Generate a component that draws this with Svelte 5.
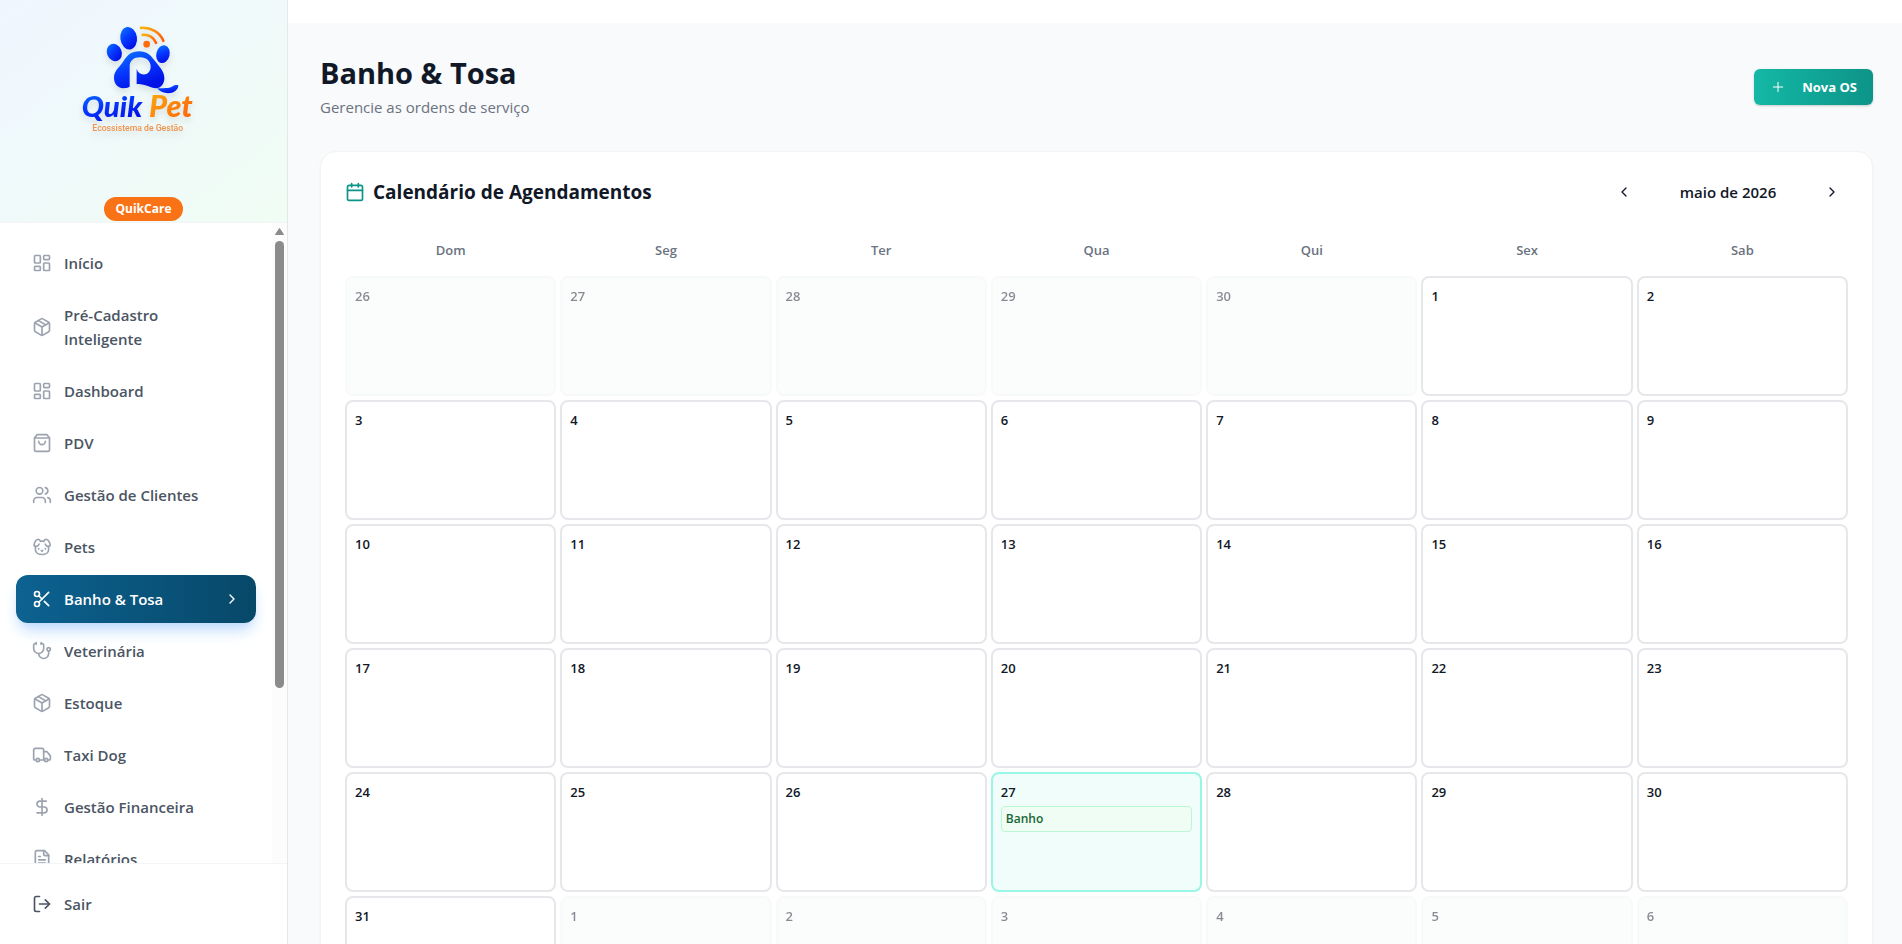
<script>
    const icons = {
        dashboard: '<rect width="7" height="9" x="3" y="3" rx="1"/><rect width="7" height="5" x="14" y="3" rx="1"/><rect width="7" height="9" x="14" y="12" rx="1"/><rect width="7" height="5" x="3" y="16" rx="1"/>',
        box: '<path d="m7.5 4.27 9 5.15"/><path d="M21 8a2 2 0 0 0-1-1.73l-7-4a2 2 0 0 0-2 0l-7 4A2 2 0 0 0 3 8v8a2 2 0 0 0 1 1.73l7 4a2 2 0 0 0 2 0l7-4A2 2 0 0 0 21 16Z"/><path d="m3.3 7 8.7 5 8.7-5"/><path d="M12 22V12"/>',
        bag: '<path d="M6 2 3 6v14a2 2 0 0 0 2 2h14a2 2 0 0 0 2-2V6l-3-4Z"/><path d="M3 6h18"/><path d="M16 10a4 4 0 0 1-8 0"/>',
        users: '<path d="M16 21v-2a4 4 0 0 0-4-4H6a4 4 0 0 0-4 4v2"/><circle cx="9" cy="7" r="4"/><path d="M22 21v-2a4 4 0 0 0-3-3.87"/><path d="M16 3.13a4 4 0 0 1 0 7.75"/>',
        dog: '<path d="M10 5.172C10 3.782 8.423 2.679 6.5 3c-2.823.47-4.113 6.006-4 7 .08.703 1.725 1.722 3.656 1 1.261-.472 1.96-1.45 2.344-2.5"/><path d="M14.267 5.172c0-1.39 1.577-2.493 3.5-2.172 2.823.47 4.113 6.006 4 7-.08.703-1.725 1.722-3.656 1-1.261-.472-1.855-1.45-2.239-2.5"/><path d="M8 14v.5"/><path d="M16 14v.5"/><path d="M11.25 16.25h1.5L12 17l-.75-.75Z"/><path d="M4.42 11.247A13.152 13.152 0 0 0 4 14.556C4 18.728 7.582 21 12 21s8-2.272 8-6.444c0-1.061-.162-2.2-.493-3.309m-9.243-6.082A8.801 8.801 0 0 1 12 5c.78 0 1.5.108 2.161.306"/>',
        scissors: '<circle cx="6" cy="6" r="3"/><path d="M8.12 8.12 12 12"/><path d="M20 4 8.12 15.88"/><circle cx="6" cy="18" r="3"/><path d="M14.8 14.8 20 20"/>',
        stethoscope: '<path d="M11 2v2"/><path d="M5 2v2"/><path d="M5 3H4a2 2 0 0 0-2 2v4a6 6 0 0 0 12 0V5a2 2 0 0 0-2-2h-1"/><path d="M8 15a6 6 0 0 0 12 0v-3"/><circle cx="20" cy="10" r="2"/>',
        truck: '<path d="M14 18V6a2 2 0 0 0-2-2H4a2 2 0 0 0-2 2v11a1 1 0 0 0 1 1h2"/><path d="M15 18H9"/><path d="M19 18h2a1 1 0 0 0 1-1v-3.65a1 1 0 0 0-.22-.624l-3.48-4.35A1 1 0 0 0 17.52 8H14"/><circle cx="17" cy="18" r="2"/><circle cx="7" cy="18" r="2"/>',
        dollar: '<path d="M12 2v20"/><path d="M17 5H9.5a3.5 3.5 0 0 0 0 7h5a3.5 3.5 0 0 1 0 7H6"/>',
        file: '<path d="M15 2H6a2 2 0 0 0-2 2v16a2 2 0 0 0 2 2h12a2 2 0 0 0 2-2V7Z"/><path d="M14 2v4a2 2 0 0 0 2 2h4"/><path d="M10 9H8"/><path d="M16 13H8"/><path d="M16 17H8"/>',
        logout: '<path d="M9 21H5a2 2 0 0 1-2-2V5a2 2 0 0 1 2-2h4"/><path d="m16 17 5-5-5-5"/><path d="M21 12H9"/>',
        calendar: '<path d="M8 2v4"/><path d="M16 2v4"/><rect width="18" height="18" x="3" y="4" rx="2"/><path d="M3 10h18"/>',
        left: '<path d="m15 18-6-6 6-6"/>',
        right: '<path d="m9 18 6-6-6-6"/>',
        plus: '<path d="M5 12h14"/><path d="M12 5v14"/>'
    }

    const menu = [
        { label: 'Início', icon: 'dashboard' },
        { label: 'Pré-Cadastro Inteligente', icon: 'box' },
        { label: 'Dashboard', icon: 'dashboard' },
        { label: 'PDV', icon: 'bag' },
        { label: 'Gestão de Clientes', icon: 'users' },
        { label: 'Pets', icon: 'dog' },
        { label: 'Banho & Tosa', icon: 'scissors' },
        { label: 'Veterinária', icon: 'stethoscope' },
        { label: 'Estoque', icon: 'box' },
        { label: 'Taxi Dog', icon: 'truck' },
        { label: 'Gestão Financeira', icon: 'dollar' },
        { label: 'Relatórios', icon: 'file' }
    ]

    const weekdays = ['Dom', 'Seg', 'Ter', 'Qua', 'Qui', 'Sex', 'Sab']
    const monthNames = ['janeiro', 'fevereiro', 'março', 'abril', 'maio', 'junho', 'julho', 'agosto', 'setembro', 'outubro', 'novembro', 'dezembro']
    const orders = { '2026-4-27': ['Banho'] }
    const today = '2026-4-27'

    let active = $state('Banho & Tosa')
    let year = $state(2026)
    let month = $state(4)

    let days = $derived.by(() => {
        const offset = new Date(year, month, 1).getDay()
        const total = Math.ceil((offset + new Date(year, month + 1, 0).getDate()) / 7) * 7
        return Array.from({ length: total }, (_, i) => {
            const date = new Date(year, month, i - offset + 1)
            const key = `${date.getFullYear()}-${date.getMonth()}-${date.getDate()}`
            return { key, number: date.getDate(), outside: date.getMonth() !== month, orders: orders[key] ?? [] }
        })
    })

    function changeMonth(step) {
        const next = new Date(year, month + step, 1)
        year = next.getFullYear()
        month = next.getMonth()
    }
</script>

{#snippet icon(name, small = false)}
    <svg class="icon" class:small viewBox="0 0 24 24" aria-hidden="true">{@html icons[name]}</svg>
{/snippet}

<div class="layout">
    <aside class="sidebar">
        <div class="brand">
            <svg class="logo" viewBox="240 60 360 350" role="img" aria-label="Quik Pet">
                <defs>
                    <linearGradient id="blue" x1="0" y1="0" x2="0.5" y2="1">
                        <stop offset="0" stop-color="#0a7cff" />
                        <stop offset="0.55" stop-color="#0637ff" />
                        <stop offset="1" stop-color="#0212e6" />
                    </linearGradient>
                    <linearGradient id="orange" x1="0" y1="0" x2="1" y2="1">
                        <stop offset="0" stop-color="#fbb00c" />
                        <stop offset="1" stop-color="#ff5a0a" />
                    </linearGradient>
                </defs>
                <g fill="url(#blue)">
                    <ellipse cx="386" cy="114" rx="25" ry="34" transform="rotate(-8 386 114)" />
                    <ellipse cx="343" cy="157" rx="22" ry="27" transform="rotate(-22 343 157)" />
                    <ellipse cx="489" cy="162" rx="20" ry="27" transform="rotate(14 489 162)" />
                    <path d="M418 153C440 153 452 165 462 179C476 198 493 212 493 234C493 250 483 264 468 264C450 264 434 250 410 252V206C413 217 421 223 431 223C444 223 452 213 452 199C452 182 439 171 421 171C401 171 389 181 389 198V260C383 264 376 264 370 264C352 264 342 250 342 232C342 212 360 200 371 182C382 164 394 153 418 153Z" />
                    <path d="M471 265C490 263 505 266 517 259C522 255 529 254 535 255C535 269 521 279 504 279C491 279 481 274 471 265Z" />
                </g>
                <circle cx="440" cy="132" r="10" fill="#ff6a0a" />
                <g fill="none" stroke="url(#orange)" stroke-width="8" stroke-linecap="round">
                    <path d="M428 104C446 102 462 112 468 128" />
                    <path d="M423 83C452 81 480 96 490 122" />
                </g>
                <text class="word" x="245" y="350" fill="url(#blue)">Quik</text>
                <text class="word wide" x="447" y="350" fill="url(#orange)">Pet</text>
                <text class="tagline" x="277" y="392">Ecossistema de Gestão</text>
            </svg>
            <span class="badge">QuikCare</span>
        </div>

        <div class="menu-area">
            <nav class="menu">
                {#each menu as item}
                    <button class="item" class:active={active === item.label} onclick={() => (active = item.label)}>
                        {@render icon(item.icon)}
                        <span class="label">{item.label}</span>
                        {#if active === item.label}
                            {@render icon('right', true)}
                        {/if}
                    </button>
                {/each}
            </nav>
            <div class="scrollbar" aria-hidden="true">
                <svg class="arrow" viewBox="0 0 9 7"><path d="M4.5 0.5L8.5 6.5H0.5Z" /></svg>
                <div class="thumb"></div>
            </div>
        </div>

        <div class="exit">
            <button class="item">
                {@render icon('logout')}
                <span class="label">Sair</span>
            </button>
        </div>
    </aside>

    <main>
        <div class="topbar"></div>
        <div class="content">
            <header class="page-header">
                <div>
                    <h1>Banho &amp; Tosa</h1>
                    <p>Gerencie as ordens de serviço</p>
                </div>
                <button class="new-order">
                    {@render icon('plus', true)}
                    Nova OS
                </button>
            </header>

            <section class="card">
                <div class="card-header">
                    <h2>
                        {@render icon('calendar')}
                        Calendário de Agendamentos
                    </h2>
                    <div class="month">
                        <button aria-label="Mês anterior" onclick={() => changeMonth(-1)}>{@render icon('left', true)}</button>
                        <span>{monthNames[month]} de {year}</span>
                        <button aria-label="Próximo mês" onclick={() => changeMonth(1)}>{@render icon('right', true)}</button>
                    </div>
                </div>

                <div class="grid weekdays">
                    {#each weekdays as weekday}
                        <div>{weekday}</div>
                    {/each}
                </div>
                <div class="grid">
                    {#each days as day (day.key)}
                        <div class="day" class:outside={day.outside} class:today={day.key === today}>
                            <span>{day.number}</span>
                            {#each day.orders as order}
                                <button class="order">{order}</button>
                            {/each}
                        </div>
                    {/each}
                </div>
            </section>
        </div>
    </main>
</div>

<style>
    :global(body) {
        margin: 0;
        background: #f9fafb;
        color: #111827;
        font-family: 'Segoe UI', 'Open Sans', 'Noto Sans', sans-serif;
        font-size: 15px;
        line-height: 24px;
    }
    .layout, .layout * {
        box-sizing: border-box;
    }
    .layout {
        display: flex;
        height: 100vh;
        overflow: hidden;
    }
    button {
        font: inherit;
        color: inherit;
        border: 0;
        padding: 0;
        background: none;
        cursor: pointer;
    }
    .icon {
        flex: none;
        width: 20px;
        height: 20px;
        fill: none;
        stroke: currentColor;
        stroke-width: 2;
        stroke-linecap: round;
        stroke-linejoin: round;
    }
    .icon.small {
        width: 16px;
        height: 16px;
    }

    .sidebar {
        flex: none;
        width: 288px;
        display: flex;
        flex-direction: column;
        background: white;
        border-right: 1px solid #e5e7eb;
    }
    .brand {
        display: flex;
        flex-direction: column;
        align-items: center;
        justify-content: space-between;
        height: 223px;
        padding: 20px 0 1px;
        border-bottom: 1px solid #f3f4f6;
        background: linear-gradient(to bottom right, #eff6ff, #f0fdf4);
    }
    .logo {
        width: 120px;
        height: 117px;
        margin-right: 8px;
        filter: drop-shadow(0 4px 3px rgba(0, 0, 0, .1));
    }
    .word {
        font: italic 900 88px Lato, sans-serif;
    }
    .word.wide {
        font-size: 92px;
    }
    .tagline {
        font: 500 26px Roboto, sans-serif;
        fill: #f0924c;
    }
    .badge {
        padding: 4px 12px;
        border-radius: 12px;
        background: #f97316;
        color: white;
        font-size: 12px;
        font-weight: 700;
        line-height: 16px;
    }
    .menu-area {
        flex: 1;
        min-height: 0;
        display: flex;
    }
    .menu {
        flex: 1;
        display: flex;
        flex-direction: column;
        gap: 4px;
        padding: 16px;
        overflow: hidden;
    }
    .item {
        flex: none;
        display: flex;
        align-items: center;
        gap: 12px;
        width: 100%;
        padding: 12px 16px;
        border-radius: 12px;
        color: #4b5563;
        font-weight: 600;
        text-align: left;
    }
    .label {
        flex: 1;
        padding-right: 32px;
    }
    .menu .icon {
        color: #9ca3af;
    }
    .item.active {
        background: linear-gradient(to right, #0c6291, #074868);
        color: white;
        box-shadow: 0 10px 15px -3px #bfdbfe, 0 4px 6px -4px #bfdbfe;
    }
    .active .label {
        padding-right: 0;
    }
    .item.active .icon {
        color: white;
    }
    .scrollbar {
        width: 15px;
        display: flex;
        flex-direction: column;
        align-items: center;
        gap: 6px;
        padding-top: 5px;
        background: #fcfcfc;
    }
    .arrow {
        width: 9px;
        height: 7px;
    }
    .arrow path {
        fill: #8b8b8b;
        stroke: #8b8b8b;
        stroke-linejoin: round;
    }
    .thumb {
        width: 9px;
        height: calc(70% + 2px);
        border-radius: 5px;
        background: #8b8b8b;
    }
    .exit {
        padding: 16px;
        border-top: 1px solid #f3f4f6;
    }

    main {
        flex: 1;
        min-width: 0;
        overflow: hidden;
        background: #f9fafc;
    }
    .topbar {
        height: 23px;
        background: white;
    }
    .content {
        padding: 32px 29px 32px 32px;
    }
    .page-header {
        display: flex;
        align-items: center;
        justify-content: space-between;
        margin-bottom: 32px;
    }
    h1 {
        margin: 0;
        font-size: 29px;
        font-weight: 700;
        line-height: 36px;
    }
    .page-header p {
        margin: 4px 0 0;
        color: #6b7280;
    }
    .new-order {
        display: flex;
        align-items: center;
        gap: 16px;
        height: 36px;
        padding: 0 16px;
        border-radius: 6px;
        background: linear-gradient(to right, #14b8a6, #0d9488);
        color: white;
        font-size: 13px;
        font-weight: 700;
        box-shadow: 0 1px 3px rgba(0, 0, 0, .1), 0 1px 2px rgba(0, 0, 0, .1);
    }
    .new-order .icon {
        stroke-width: 1.5;
    }
    .card {
        padding: 24px;
        border: 1px solid #f3f4f6;
        border-radius: 16px;
        background: white;
        box-shadow: 0 1px 2px rgba(0, 0, 0, .05);
    }
    .card-header {
        display: flex;
        align-items: center;
        justify-content: space-between;
        margin-bottom: 24px;
    }
    h2 {
        display: flex;
        align-items: center;
        gap: 8px;
        margin: 0;
        font-size: 19px;
        font-weight: 700;
        line-height: 28px;
    }
    h2 .icon {
        color: #0d9488;
    }
    .month {
        display: flex;
        align-items: center;
        gap: 8px;
    }
    .month button {
        display: flex;
        align-items: center;
        justify-content: center;
        width: 32px;
        height: 32px;
    }
    .month span {
        min-width: 160px;
        font-weight: 600;
        text-align: center;
    }
    .grid {
        display: grid;
        grid-template-columns: repeat(7, minmax(0, 1fr));
        gap: 4px;
        font-size: 13px;
        font-weight: 600;
        line-height: 20px;
    }
    .weekdays {
        margin-bottom: 8px;
        color: #6b7280;
        text-align: center;
    }
    .weekdays div {
        padding: 8px 0;
    }
    .day {
        display: flex;
        flex-direction: column;
        gap: 4px;
        height: 120px;
        padding: 8px;
        border: 2px solid #e5e7eb;
        border-radius: 8px;
        background: white;
    }
    .day.outside {
        border-color: #f3f4f6;
        background: #f9fafb;
        opacity: .5;
    }
    .day.today {
        border-color: #99f6e4;
        background: #f0fdfa;
    }
    .order {
        padding: 4px;
        border: 1px solid #bbf7d0;
        border-radius: 4px;
        background: #f0fdf4;
        color: #166534;
        font-size: 12px;
        line-height: 16px;
        text-align: left;
    }
</style>
